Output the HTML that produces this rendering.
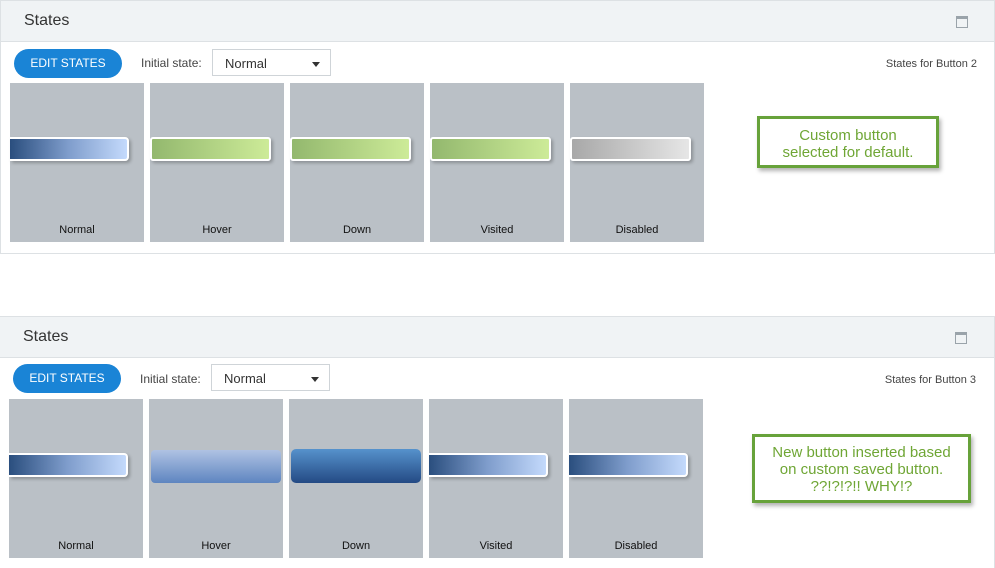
<!DOCTYPE html><html style="height:568px;overflow:hidden"><head><style>
body{margin:0;width:995px;height:568px;background:#fff;position:relative;font-family:"Liberation Sans",sans-serif;overflow:hidden}
.a{position:absolute}
.panel{position:absolute;border:1px solid #dde1e4;background:#fff}
.hdr{position:absolute;left:0;right:0;top:0;height:40px;background:#f0f3f5;border-bottom:1px solid #dde1e4}
.tile{position:absolute;width:134px;height:159px;background:#bac0c6}
.lbl{position:absolute;bottom:6px;width:100%;text-align:center;font-size:11px;color:#111}
.bn{position:absolute;left:0;top:54px;width:117px;height:20px;border:2px solid #fff;border-left:none;border-radius:0 4px 4px 0;box-shadow:2px 2px 3px rgba(0,0,0,.25)}
.blue{background:linear-gradient(90deg,#2a4e7e,#7f9dcc 50%,#c4dafc)}
.green{background:linear-gradient(90deg,#93b86e,#cdeb98)}
.gray{background:linear-gradient(90deg,#a8a8a8,#e6e6e6)}
.btn{position:absolute;width:108px;height:29px;border-radius:15px;background:#1a84d6;color:#fff;font-size:12px;text-align:center;line-height:29px}
.sel{position:absolute;width:119px;height:27px;border:1px solid #cfd4d8;font-size:13px;color:#333;line-height:27px;padding-left:12px;box-sizing:border-box}
.sel:after{content:"";position:absolute;right:10px;top:12px;border:4px solid transparent;border-top:5px solid #333}
.note{position:absolute;border:3px solid #67a23a;background:#fff;color:#6fa635;font-size:15px;text-align:center;box-shadow:2px 3px 4px rgba(0,0,0,.3);box-sizing:border-box}
.ico{position:absolute;width:10px;height:8px;border:1px solid #9aa3aa;border-top-width:3px}
.ttl{position:absolute;left:23px;top:11px;font-size:16px;color:#333}
</style></head><body>

<div class="panel" style="left:0;top:0;width:993px;height:252px">
 <div class="hdr"><div class="ttl">States</div><div class="ico" style="left:955px;top:15px"></div></div>
 <div class="btn" style="left:13px;top:48px">EDIT STATES</div>
 <div class="a" style="left:140px;top:55px;font-size:12px;color:#444">Initial state:</div>
 <div class="sel" style="left:211px;top:48px">Normal</div>
 <div class="a" style="left:850px;top:57px;font-size:11px;color:#444;width:126px;text-align:right">States for Button 2</div>
 <div class="tile" style="left:9px;top:82px"><div class="bn blue"></div><div class="lbl">Normal</div></div>
 <div class="tile" style="left:149px;top:82px"><div class="bn green" style="border-left:2px solid #fff;border-radius:3px"></div><div class="lbl">Hover</div></div>
 <div class="tile" style="left:289px;top:82px"><div class="bn green" style="border-left:2px solid #fff;border-radius:3px"></div><div class="lbl">Down</div></div>
 <div class="tile" style="left:429px;top:82px"><div class="bn green" style="border-left:2px solid #fff;border-radius:3px"></div><div class="lbl">Visited</div></div>
 <div class="tile" style="left:569px;top:82px"><div class="bn gray" style="border-left:2px solid #fff;border-radius:3px"></div><div class="lbl">Disabled</div></div>
 <div class="note" style="left:756px;top:115px;width:182px;height:52px;padding-top:8px;line-height:17px">Custom button<br>selected for default.</div>
</div>

<div class="panel" style="left:-1px;top:316px;width:994px;height:252px">
 <div class="hdr"><div class="ttl">States</div><div class="ico" style="left:955px;top:15px"></div></div>
 <div class="btn" style="left:13px;top:47px">EDIT STATES</div>
 <div class="a" style="left:140px;top:55px;font-size:12px;color:#444">Initial state:</div>
 <div class="sel" style="left:211px;top:47px">Normal</div>
 <div class="a" style="left:850px;top:57px;font-size:11px;color:#444;width:126px;text-align:right">States for Button 3</div>
 <div class="tile" style="left:9px;top:82px"><div class="bn blue"></div><div class="lbl">Normal</div></div>
 <div class="tile" style="left:149px;top:82px"><div class="a" style="left:2px;top:51px;width:130px;height:33px;border-radius:4px;background:linear-gradient(#afc2e3,#5e85c0)"></div><div class="lbl">Hover</div></div>
 <div class="tile" style="left:289px;top:82px"><div class="a" style="left:2px;top:50px;width:130px;height:34px;border-radius:5px;background:linear-gradient(#5692cc,#244a84)"></div><div class="lbl">Down</div></div>
 <div class="tile" style="left:429px;top:82px"><div class="bn blue"></div><div class="lbl">Visited</div></div>
 <div class="tile" style="left:569px;top:82px"><div class="bn blue"></div><div class="lbl">Disabled</div></div>
 <div class="note" style="left:752px;top:117px;width:219px;height:69px;padding-top:7px;line-height:17px">New button inserted based<br>on custom saved button.<br>??!?!?!! WHY!?</div>
</div>
</body></html>
